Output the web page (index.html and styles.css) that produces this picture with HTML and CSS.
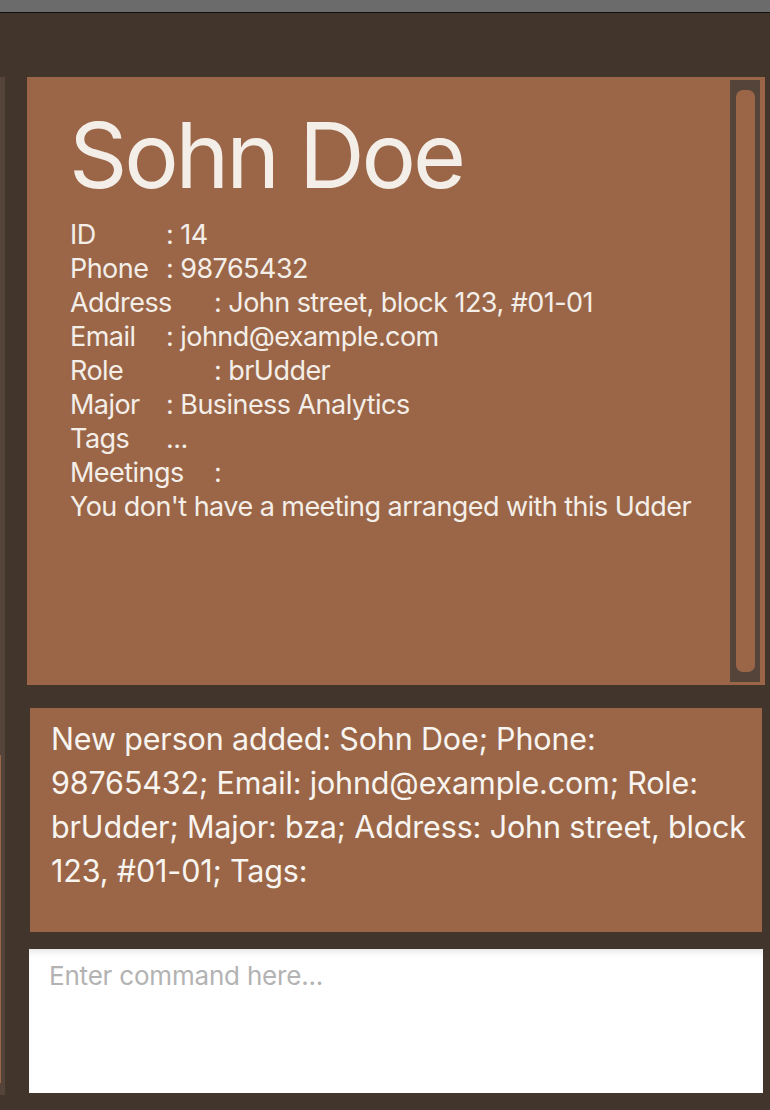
FILE: index.html
```html
<!DOCTYPE html>
<html>
<head>
<meta charset="utf-8">
<link rel="stylesheet" href="styles.css">
</head>
<body>
<div class="topbar"></div>
<div class="app">
  <div class="sidelist"><div class="sidelist-item"></div></div>
  <div class="main">
    <section class="card">
      <div class="card-body">
        <h1 class="name">Sohn Doe</h1>
        <div class="row"><span class="label">ID</span><span class="value">: 14</span></div>
        <div class="row"><span class="label">Phone</span><span class="value">: 98765432</span></div>
        <div class="row"><span class="label wide">Address</span><span class="value">: John street, block 123, #01-01</span></div>
        <div class="row"><span class="label">Email</span><span class="value">: johnd@example.com</span></div>
        <div class="row"><span class="label wide">Role</span><span class="value">: brUdder</span></div>
        <div class="row"><span class="label">Major</span><span class="value">: Business Analytics</span></div>
        <div class="row"><span class="label">Tags</span><span class="value">...</span></div>
        <div class="row"><span class="label wide">Meetings</span><span class="value">:</span></div>
        <div class="row">You don't have a meeting arranged with this Udder</div>
      </div>
      <div class="scrolltrack"><div class="scrollthumb"></div></div>
    </section>
    <section class="result">
      New person added: Sohn Doe; Phone:<br>98765432; Email: johnd@example.com; Role:<br>brUdder; Major: bza; Address: John street, block<br>123, #01-01; Tags:
    </section>
    <div class="command">
      <input class="command-input" type="text" placeholder="Enter command here...">
    </div>
  </div>
</div>
</body>
</html>
```
FILE: styles.css
```css
html, body {
  margin: 0;
  padding: 0;
}
body {
  background: #42352c;
  width: 770px;
  height: 1110px;
  overflow: hidden;
  font-family: Inter, "Noto Sans", sans-serif;
  color: #f4eee9;
}
.topbar {
  height: 12px;
  background: #6b6b6b;
  border-bottom: 1px solid #111;
}
.app {
  display: flex;
  padding-top: 64px;
}
.sidelist {
  width: 5px;
  height: 1018px;
  background: #54443a;
  display: flex;
  flex-direction: column;
  justify-content: flex-end;
}
.sidelist-item {
  width: 1px;
  height: 328px;
  margin-bottom: 12px;
  background: #9a6647;
}
.main {
  margin-left: 22px;
  width: 738px;
  display: flex;
  flex-direction: column;
}
.card {
  height: 608px;
  background: #9a6647;
  display: flex;
}
.card-body {
  flex: 1;
  padding: 28px 0 0 43px;
}
.name {
  margin: 0 0 13px -1px;
  font-weight: 400;
  font-size: 91px;
  line-height: 100px;
  letter-spacing: -3.2px;
  color: #f4eee9;
}
.row {
  font-size: 27px;
  line-height: 34px;
  white-space: nowrap;
  letter-spacing: -0.55px;
}
.label {
  display: inline-block;
  width: 96px;
}
.label.wide {
  width: 144px;
}
.scrolltrack {
  width: 30px;
  margin: 3px 5px 3px 0;
  background: #54443a;
  padding: 10px 5px 10px 6px;
  box-sizing: border-box;
}
.scrollthumb {
  height: 100%;
  background: #9a6647;
  border-radius: 7px;
}
.result {
  margin: 23px 3px 0 3px;
  height: 224px;
  box-sizing: border-box;
  padding: 9px 0 0 21px;
  background: #9a6647;
  font-size: 30.5px;
  line-height: 44px;
  letter-spacing: -0.15px;
  color: #f8f4f0;
}
.command {
  margin: 17px 2px 0 2px;
  height: 144px;
  background: #fff;
  box-shadow: inset 0 6px 6px -3px #e6e6e6;
  display: flex;
}
.command-input {
  flex: 1;
  border: none;
  outline: none;
  background: transparent;
  align-self: flex-start;
  margin: 10px 0 0 20px;
  padding: 0;
  font-family: Inter, "Noto Sans", sans-serif;
  font-size: 26px;
  line-height: 34px;
  letter-spacing: -0.2px;
  color: #333;
}
.command-input::placeholder {
  color: #b3b3b3;
}
```
